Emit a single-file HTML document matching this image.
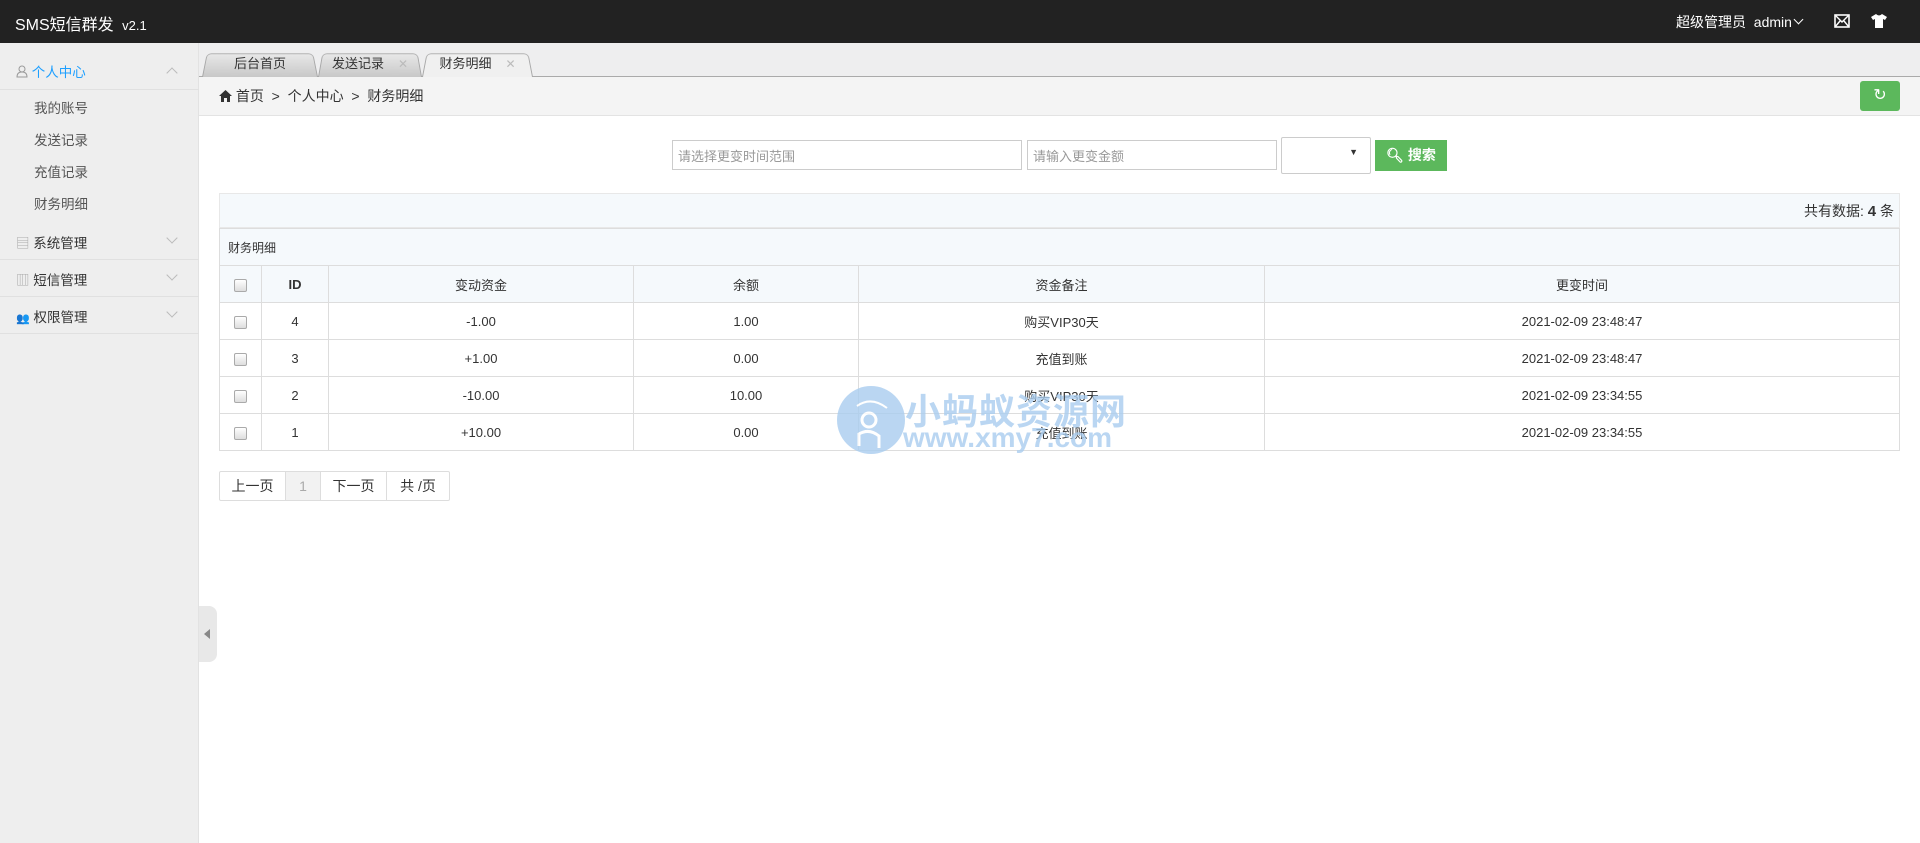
<!DOCTYPE html>
<html><head><meta charset="utf-8"><style>
*{margin:0;padding:0;box-sizing:border-box}
body{width:1920px;height:843px;overflow:hidden;background:#fff;font-family:"Liberation Sans","Noto Sans CJK SC",sans-serif;font-size:13px;color:#333;position:relative}
.abs{position:absolute}
#hd{left:0;top:0;width:1920px;height:43px;background:#222}
#side{left:0;top:43px;width:199px;height:800px;background:#eee;border-right:1px solid #e2e2e2}
.si{position:absolute;left:0;width:199px;font-size:14px;color:#333}
.sep{position:absolute;left:0;width:199px;height:1px;background:#e0e0e0}
.chev{position:absolute;right:22px;width:8px;height:8px;border-right:1px solid #bbb;border-bottom:1px solid #bbb}
#tabs{left:199px;top:43px;width:1721px;height:34px;background:#eeeeef;border-bottom:1px solid #aaa}
.tab{position:absolute;top:8px;height:26px;font-size:13px;color:#333;text-align:center;line-height:26px}
.tab .bg{position:absolute;left:0;top:0;width:100%;height:100%;border:1px solid #a8a8a8;border-bottom:none;border-radius:5px 5px 0 0;transform:perspective(40px) rotateX(8deg);transform-origin:bottom;background:linear-gradient(#e8e8e8,#c8c8c8)}
.tab span{position:relative}
.x{position:relative;color:#bbb;margin-left:14px;font-size:12px}
#bc{left:199px;top:77px;width:1721px;height:39px;background:#f4f4f4;border-bottom:1px solid #e3e3e3;font-size:14px;line-height:39px;padding-left:20px;color:#333}
input{position:absolute;height:30px;border:1px solid #ccc;font-size:13px;padding-left:5px;font-family:inherit;color:#999}
table{position:absolute;left:219px;top:228px;width:1681px;border-collapse:collapse;font-size:13px}
td,th{border:1px solid #ddd;text-align:center;height:37px;font-weight:normal}
th{background:#f5f9fc}
.cb{display:inline-block;width:13px;height:13px;border:1px solid #aaa;border-radius:2px;background:linear-gradient(#fff,#ddd);vertical-align:middle}
</style></head><body>
<div id="hd" class="abs">
 <div class="abs" style="left:15px;top:11px;color:#fff;font-size:16px">SMS短信群发 <span style="font-size:13px;margin-left:4px">v2.1</span></div>
 <div class="abs" style="left:1676px;top:12px;color:#fff;font-size:14px">超级管理员 &nbsp;admin<span style="display:inline-block;width:7px;height:7px;border-right:1.5px solid #fff;border-bottom:1.5px solid #fff;transform:rotate(45deg);margin:0 0 4px 3px"></span></div>
 <svg class="abs" style="left:1834px;top:14px" width="16" height="14" viewBox="0 0 16 14"><rect x="1" y="1" width="14" height="12" fill="none" stroke="#fff" stroke-width="1.6"/><path d="M1 1L8 8L15 1M1 13L6 7M15 13L10 7" stroke="#fff" stroke-width="1.4" fill="none"/></svg>
 <svg class="abs" style="left:1871px;top:14px" width="16" height="14" viewBox="0 0 16 14"><path d="M5 0L0 3L2 6L4 5V14H12V5L14 6L16 3L11 0Q8 3 5 0Z" fill="#fff"/></svg>
</div>
<div id="side" class="abs">
 <div class="si" style="top:18px;color:#1e9fff;padding-left:16px;font-size:13.5px">
  <svg width="12" height="13" viewBox="0 0 12 13" style="vertical-align:-1px"><circle cx="6" cy="4" r="3" fill="none" stroke="#999"/><path d="M1 12Q1 7 6 7Q11 7 11 12Z" fill="none" stroke="#999"/></svg> 个人中心</div>
 <div class="chev" style="top:26px;transform:rotate(-135deg)"></div>
 <div class="sep" style="top:46px"></div>
 <div class="si" style="top:50px;padding-left:34px;line-height:32px;color:#555;font-size:13.5px">我的账号<br>发送记录<br>充值记录<br>财务明细</div>
 <div class="si" style="top:189px;padding-left:16px;font-size:13.5px"><span style="color:#aaa">▤</span> 系统管理</div><div class="chev" style="top:191px;transform:rotate(45deg)"></div>
 <div class="sep" style="top:216px"></div>
 <div class="si" style="top:226px;padding-left:16px;font-size:13.5px"><span style="color:#aaa">▥</span> 短信管理</div><div class="chev" style="top:228px;transform:rotate(45deg)"></div>
 <div class="sep" style="top:253px"></div>
 <div class="si" style="top:263px;padding-left:16px;font-size:13.5px"><span style="color:#aaa;font-size:11px">👥</span> 权限管理</div><div class="chev" style="top:265px;transform:rotate(45deg)"></div>
 <div class="sep" style="top:290px"></div>
</div>
<div class="abs" style="left:199px;top:606px;width:18px;height:56px;background:#e8e8e8;border-radius:0 8px 8px 0"><div style="position:absolute;left:5px;top:23px;border:5px solid transparent;border-right:6px solid #888;border-left:none"></div></div>
<div id="tabs" class="abs">
 <div class="tab" style="left:3px;width:116px"><div class="bg"></div><span>后台首页</span></div>
 <div class="tab" style="left:119px;width:104px"><div class="bg"></div><span>发送记录</span><span class="x">✕</span></div>
 <div class="tab" style="left:223px;width:111px"><div class="bg" style="background:#f0f0f0"></div><span>财务明细</span><span class="x">✕</span></div>
</div>
<div id="bc" class="abs"><svg width="13" height="12" viewBox="0 0 13 12" style="vertical-align:-1px"><path d="M6.5 0L0 6H2V12H5V8H8V12H11V6H13Z" fill="#333"/></svg> 首页 &nbsp;&gt;&nbsp; 个人中心 &nbsp;&gt;&nbsp; 财务明细</div>
<div class="abs" style="left:1860px;top:81px;width:40px;height:30px;background:#5cb85c;border-radius:3px;color:#fff;text-align:center;line-height:30px;font-size:16px">↻</div>
<input style="left:672px;top:140px;width:350px" value="请选择更变时间范围">
<input style="left:1027px;top:140px;width:250px" value="请输入更变金额">
<div class="abs" style="left:1281px;top:137px;width:90px;height:37px;border:1px solid #ccc;border-radius:2px"><span style="position:absolute;right:12px;top:9px;font-size:9px">▼</span></div>
<div class="abs" style="left:1375px;top:140px;width:72px;height:31px;background:#5cb85c;color:#fff;font-size:14px;line-height:31px;text-align:center;font-weight:bold">🔍︎ 搜索</div>
<div class="abs" style="left:219px;top:193px;width:1681px;height:35px;background:#f5f9fc;border:1px solid #e8e8e8;text-align:right;padding-right:5px;line-height:35px;font-size:14px">共有数据: <b style="font-size:15px">4</b> 条</div>
<table>
<tr><th colspan="6" style="text-align:left;padding-left:8px;font-size:12px">财务明细</th></tr>
<tr><th style="width:42px"><span class="cb"></span></th><th style="width:67px;font-weight:bold">ID</th><th style="width:305px">变动资金</th><th style="width:225px">余额</th><th style="width:406px">资金备注</th><th>更变时间</th></tr>
<tr><td><span class="cb"></span></td><td>4</td><td>-1.00</td><td>1.00</td><td>购买VIP30天</td><td>2021-02-09 23:48:47</td></tr>
<tr><td><span class="cb"></span></td><td>3</td><td>+1.00</td><td>0.00</td><td>充值到账</td><td>2021-02-09 23:48:47</td></tr>
<tr><td><span class="cb"></span></td><td>2</td><td>-10.00</td><td>10.00</td><td>购买VIP30天</td><td>2021-02-09 23:34:55</td></tr>
<tr><td><span class="cb"></span></td><td>1</td><td>+10.00</td><td>0.00</td><td>充值到账</td><td>2021-02-09 23:34:55</td></tr>
</table>
<div class="abs" style="left:219px;top:471px;height:30px;border:1px solid #ddd;border-radius:2px;display:flex;font-size:14px;line-height:28px">
 <div style="width:66px;text-align:center;border-right:1px solid #ddd">上一页</div>
 <div style="width:35px;text-align:center;border-right:1px solid #ddd;background:#f2f2f2;color:#aaa">1</div>
 <div style="width:66px;text-align:center;border-right:1px solid #ddd">下一页</div>
 <div style="width:62px;text-align:center">共 /页</div>
</div>
<svg class="abs" style="left:837px;top:386px" width="68" height="68" viewBox="0 0 68 68" opacity="0.8"><circle cx="34" cy="34" r="34" fill="#a9cdef"/><path d="M20 20Q34 10 50 22" stroke="#fff" stroke-width="2" fill="none"/><circle cx="32" cy="34" r="7" fill="none" stroke="#fff" stroke-width="3"/><path d="M22 60V48Q32 42 42 50V62" stroke="#fff" stroke-width="3" fill="none"/></svg>
<div class="abs" style="left:905px;top:383px;font-size:36px;font-weight:bold;color:#a9cdef;opacity:.8;letter-spacing:1px">小蚂蚁资源网</div>
<div class="abs" style="left:903px;top:422px;font-size:28px;font-weight:bold;color:#a9cdef;opacity:.8">www.xmy7.com</div>
</body></html>
